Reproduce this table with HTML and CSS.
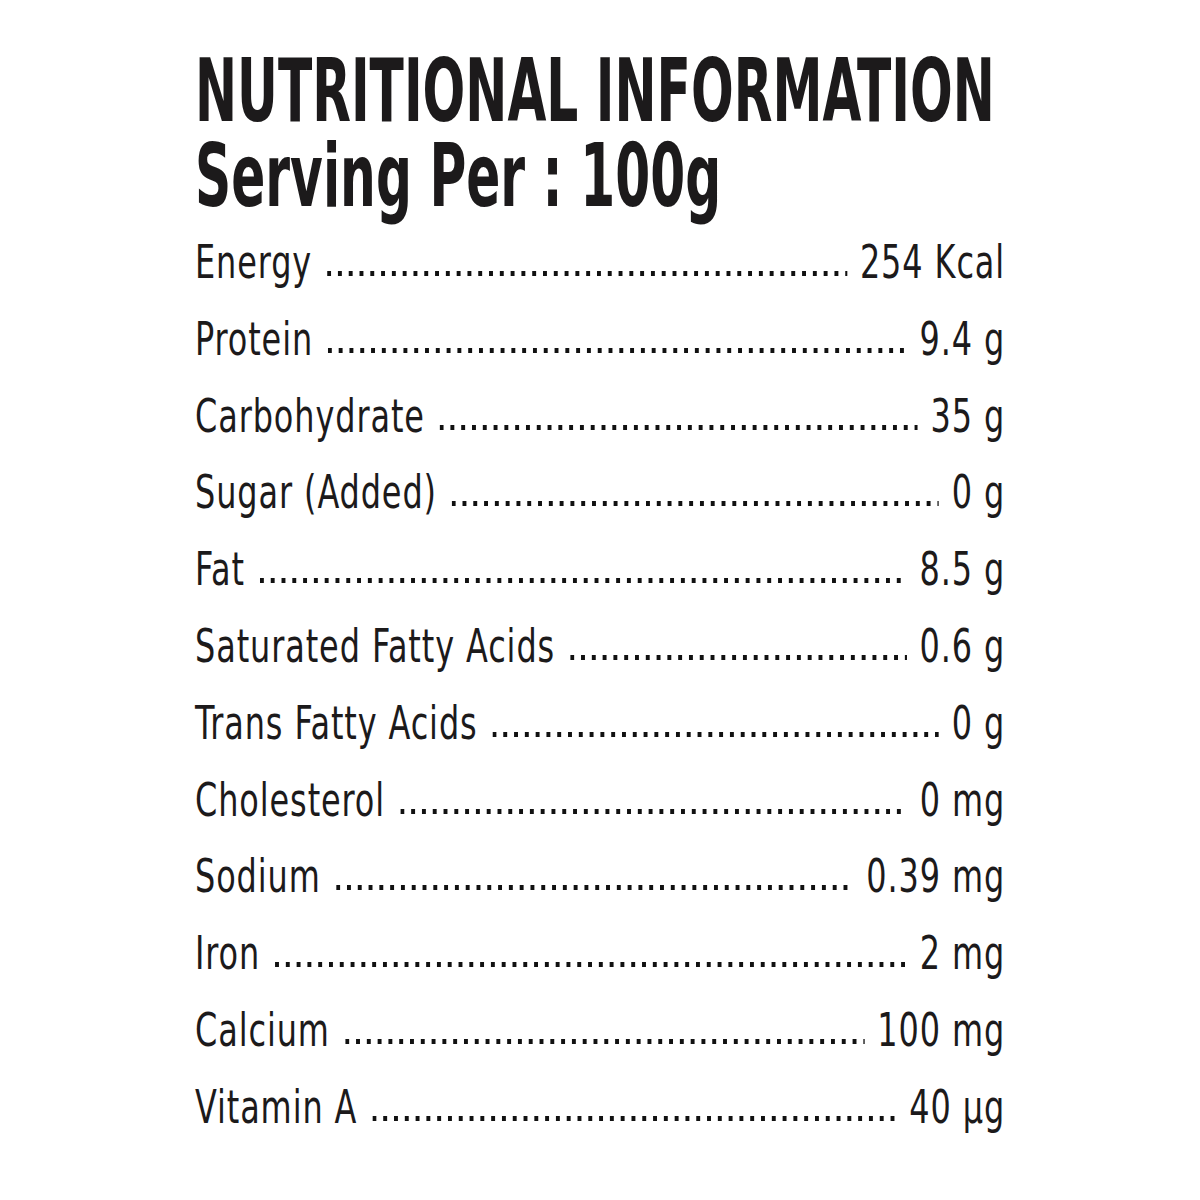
FILE: index.html
```html
<!DOCTYPE html>
<html>
<head>
<meta charset="utf-8">
<link rel="stylesheet" href="styles.css">
</head>
<body>
<main class="panel">
  <header class="head">
    <h1 class="title">NUTRITIONAL INFORMATION<br>Serving Per : 100g</h1>
  </header>
  <ul class="facts">
    <li class="row"><span class="label">Energy</span><span class="dots"></span><span class="value">254 Kcal</span></li>
    <li class="row"><span class="label">Protein</span><span class="dots"></span><span class="value">9.4 g</span></li>
    <li class="row"><span class="label">Carbohydrate</span><span class="dots"></span><span class="value">35 g</span></li>
    <li class="row"><span class="label">Sugar (Added)</span><span class="dots"></span><span class="value">0 g</span></li>
    <li class="row"><span class="label">Fat</span><span class="dots"></span><span class="value">8.5 g</span></li>
    <li class="row"><span class="label">Saturated Fatty Acids</span><span class="dots"></span><span class="value">0.6 g</span></li>
    <li class="row"><span class="label">Trans Fatty Acids</span><span class="dots"></span><span class="value">0 g</span></li>
    <li class="row"><span class="label">Cholesterol</span><span class="dots"></span><span class="value">0 mg</span></li>
    <li class="row"><span class="label">Sodium</span><span class="dots"></span><span class="value">0.39 mg</span></li>
    <li class="row"><span class="label">Iron</span><span class="dots"></span><span class="value">2 mg</span></li>
    <li class="row"><span class="label">Calcium</span><span class="dots"></span><span class="value">100 mg</span></li>
    <li class="row"><span class="label">Vitamin A</span><span class="dots"></span><span class="value">40 µg</span></li>
  </ul>
</main>
</body>
</html>
```
FILE: styles.css
```css
html, body {
  margin: 0;
  padding: 0;
  background: #ffffff;
}
body {
  font-family: "DejaVu Sans Condensed", "DejaVu Sans", sans-serif;
  color: #1c1a1b;
}
.panel {
  width: 810px;
  padding: 48px 0 0 195px;
}
.head {
  margin-bottom: 6px;
}
.title {
  margin: 0;
  font-size: 88px;
  line-height: 85px;
  font-weight: 700;
  white-space: nowrap;
  transform: scaleX(0.635);
  transform-origin: left center;
}
.facts {
  list-style: none;
  margin: 0;
  padding: 0;
  width: 1073px;
  transform: scaleX(0.755);
  transform-origin: left top;
}
.row {
  display: flex;
  align-items: baseline;
  height: 76.8px;
  line-height: 76.8px;
  font-size: 47px;
  letter-spacing: 1.2px;
  white-space: nowrap;
}
.dots {
  flex: 1;
  height: 7px;
  margin: 0 17px 0 20px;
  background-image: linear-gradient(to right, #111 0 5px, transparent 5px 14.3px);
  background-size: 14.3px 4.5px;
  background-position: left top;
  background-repeat: repeat-x;
}
```
